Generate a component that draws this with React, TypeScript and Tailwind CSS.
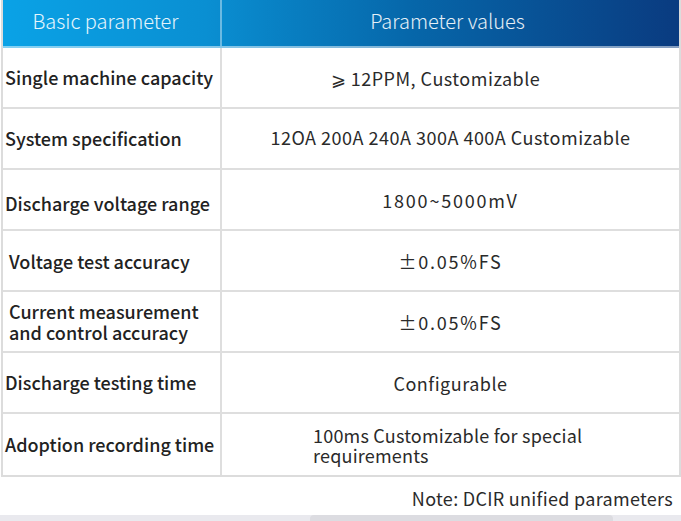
const font = { fontFamily: '"Noto Sans CJK SC", "Noto Sans", sans-serif' };

const rows: { label: string; value: string; wrap?: boolean; indent?: boolean; shift?: string; labelPad?: string }[] = [
  { label: "Single machine capacity", value: "⩾ 12PPM, Customizable", shift: "mr-[30px]" },
  { label: "System specification", value: "12OA 200A 240A 300A 400A Customizable", shift: "mb-[3px]" },
  { label: "Discharge voltage range", value: "1800~5000mV", labelPad: "pt-[8px]" },
  { label: "Voltage test accuracy", value: "±0.05%FS", indent: true, labelPad: "pt-[2px]" },
  { label: "Current measurement and control accuracy", value: "±0.05%FS", indent: true },
  { label: "Discharge testing time", value: "Configurable" },
  { label: "Adoption recording time", value: "100ms Customizable for special requirements", wrap: true },
];

export default function App() {
  return (
    <div className="flex h-[521px] w-[681px] flex-col bg-white" style={font}>
      <div className="ml-px w-[680px] border-x-2 border-b-2 border-[#dcdcdc]">
        <div className="grid h-[48px] grid-cols-[219px_1fr] border-b-2 border-white/50 bg-[linear-gradient(90deg,#0aa2e6_0%,#0a8fd2_30%,#0667aa_60%,#0a3b80_100%)] text-[20px] font-light text-white/90">
          <div className="flex items-center justify-center border-r-2 border-white/40 pb-1 pr-[12px]">Basic parameter</div>
          <div className="flex items-center justify-center pb-1 pr-[6px]">Parameter values</div>
        </div>
        {rows.map((row, i) => (
          <div
            key={row.label}
            className={`grid h-[61px] grid-cols-[219px_1fr] ${i < rows.length - 1 ? "border-b-2 border-[#dedede]" : ""}`}
          >
            <div
              className={`flex items-center border-r-2 border-[#dedede] text-[18px] font-medium leading-[21px] text-[#222] ${row.indent ? "pl-[6px]" : "pl-[2px]"} ${row.labelPad ?? ""}`}
            >
              <span className={row.indent && row.label.length > 30 ? "max-w-[205px]" : "whitespace-nowrap"}>{row.label}</span>
            </div>
            <div className="flex items-center justify-center text-[18px] leading-[20px] tracking-[0.5px] text-[#2a2a2a]">
              {row.wrap ? (
                <span className="w-[275px] pr-[4px] text-left tracking-[0.2px]">{row.value}</span>
              ) : (
                <span
                  className={`${row.value.startsWith("±") || row.value.startsWith("1800") ? "tracking-[1.8px]" : ""} ${row.shift ?? ""}`}
                >
                  {row.value}
                </span>
              )}
            </div>
          </div>
        ))}
      </div>
      <div className="flex flex-1 items-center justify-end pr-[8px] pt-[4px] text-[18px] tracking-[0.3px] text-[#2a2a2a]">
        Note: DCIR unified parameters
      </div>
      <div className="flex h-[6px] bg-[#e9e9ee]">
        <div className="ml-[310px] h-full w-[303px] rounded-t-sm bg-[#dcdce1]" />
      </div>
    </div>
  );
}
